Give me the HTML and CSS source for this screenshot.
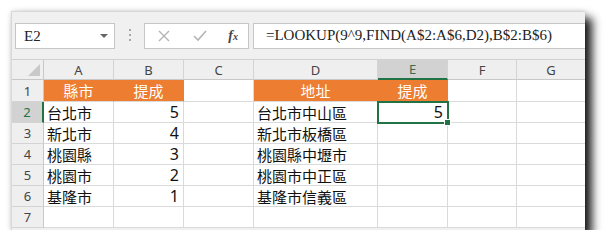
FILE: index.html
```html
<!DOCTYPE html>
<html lang="zh-Hant">
<head>
    <meta charset="UTF-8">
    <title>LOOKUP</title>
    <link rel="stylesheet" href="styles.css">
</head>
<body>
    <div class="window">
        <div class="toolbar">
            <div class="namebox">
                <span>E2</span>
                <span class="arrow"></span>
            </div>
            <div class="dots"><i></i><i></i><i></i></div>
            <div class="buttons">
                <svg width="14" height="14" viewBox="0 0 14 14"><path d="M2 2 L12 12 M12 2 L2 12" stroke="#b4b4b4" stroke-width="1.4" fill="none"/></svg>
                <svg width="16" height="14" viewBox="0 0 16 14"><path d="M2 7 L6 11 L14 2" stroke="#b4b4b4" stroke-width="1.6" fill="none"/></svg>
                <span class="fx">f<small>x</small></span>
            </div>
            <div class="formula">=LOOKUP(9^9,FIND(A$2:A$6,D2),B$2:B$6)</div>
        </div>
        <div class="sheet">
            <div class="corner"></div>
            <div class="colhead">A</div>
            <div class="colhead">B</div>
            <div class="colhead">C</div>
            <div class="colhead">D</div>
            <div class="colhead active">E</div>
            <div class="colhead">F</div>
            <div class="colhead">G</div>

            <div class="rowhead">1</div>
            <div class="cell title">縣市</div>
            <div class="cell title">提成</div>
            <div class="cell"></div>
            <div class="cell title">地址</div>
            <div class="cell title">提成</div>
            <div class="cell"></div>
            <div class="cell"></div>

            <div class="rowhead active">2</div>
            <div class="cell">台北市</div>
            <div class="cell num">5</div>
            <div class="cell"></div>
            <div class="cell">台北市中山區</div>
            <div class="cell num selected">5<span class="handle"></span></div>
            <div class="cell"></div>
            <div class="cell"></div>

            <div class="rowhead">3</div>
            <div class="cell">新北市</div>
            <div class="cell num">4</div>
            <div class="cell"></div>
            <div class="cell">新北市板橋區</div>
            <div class="cell"></div>
            <div class="cell"></div>
            <div class="cell"></div>

            <div class="rowhead">4</div>
            <div class="cell">桃園縣</div>
            <div class="cell num">3</div>
            <div class="cell"></div>
            <div class="cell">桃園縣中壢市</div>
            <div class="cell"></div>
            <div class="cell"></div>
            <div class="cell"></div>

            <div class="rowhead">5</div>
            <div class="cell">桃園市</div>
            <div class="cell num">2</div>
            <div class="cell"></div>
            <div class="cell">桃園市中正區</div>
            <div class="cell"></div>
            <div class="cell"></div>
            <div class="cell"></div>

            <div class="rowhead">6</div>
            <div class="cell">基隆市</div>
            <div class="cell num">1</div>
            <div class="cell"></div>
            <div class="cell">基隆市信義區</div>
            <div class="cell"></div>
            <div class="cell"></div>
            <div class="cell"></div>

            <div class="rowhead">7</div>
            <div class="cell"></div>
            <div class="cell"></div>
            <div class="cell"></div>
            <div class="cell"></div>
            <div class="cell"></div>
            <div class="cell"></div>
            <div class="cell"></div>
        </div>
    </div>
</body>
</html>
```

FILE: styles.css
```css
body {
    margin: 0;
    background-color: #fff;
    font-family: "Noto Sans", "Noto Sans CJK TC", sans-serif;
}
.window {
    margin: 11px 0 0 11px;
    width: 574px;
    height: 219px;
    background-color: #f0f0f0;
    border-top: 1px solid #d8d8d8;
    border-left: 1px solid #d8d8d8;
    box-sizing: border-box;
    box-shadow: 7px 7px 9px rgba(0, 0, 0, 0.9), 0 0 5px rgba(0, 0, 0, 0.15);
    overflow: hidden;
}
.toolbar {
    height: 47px;
    display: flex;
    align-items: flex-start;
    padding: 11px 0 0 3px;
    box-sizing: border-box;
}
.namebox {
    width: 100px;
    height: 26px;
    box-sizing: border-box;
    background-color: #fff;
    border: 1px solid #c6c6c6;
    display: flex;
    align-items: center;
    justify-content: space-between;
    padding: 0 6px 0 8px;
    font-family: "Liberation Serif", serif;
    font-size: 15px;
    color: #222;
}
.arrow {
    width: 0;
    height: 0;
    border-left: 4px solid transparent;
    border-right: 4px solid transparent;
    border-top: 4px solid #666;
}
.dots {
    width: 29px;
    display: flex;
    flex-direction: column;
    align-items: center;
    gap: 3px;
    padding-top: 6px;
}
.dots i {
    width: 2px;
    height: 2px;
    background-color: #a8a8a8;
}
.buttons {
    width: 105px;
    height: 26px;
    box-sizing: border-box;
    background-color: #fff;
    border: 1px solid #c6c6c6;
    display: flex;
    align-items: center;
    justify-content: space-between;
    padding: 0 10px 0 12px;
}
.fx {
    font-family: "Liberation Serif", serif;
    font-style: italic;
    font-weight: bold;
    font-size: 14px;
    color: #444;
}
.fx small {
    font-size: 10px;
}
.formula {
    margin-left: 4px;
    flex: 1;
    height: 26px;
    box-sizing: border-box;
    background-color: #fff;
    border: 1px solid #c6c6c6;
    border-right: none;
    padding: 3px 0 0 12px;
    font-family: "Liberation Serif", serif;
    font-size: 15px;
    color: #222;
    white-space: nowrap;
}
.sheet {
    display: grid;
    grid-template-columns: 32px 70px 70px 70px 124px 70px 69px 69px;
    grid-template-rows: 20px 22px 21px 21px 21px 21px 21px 21px;
    background-color: #fff;
    border-top: 1px solid #d0d0d0;
}
.corner {
    background-color: #efefef;
    border-right: 1px solid #c8c8c8;
    border-bottom: 1px solid #c8c8c8;
    position: relative;
}
.corner::after {
    content: "";
    position: absolute;
    right: 3px;
    bottom: 3px;
    border-left: 12px solid transparent;
    border-bottom: 12px solid #c9c9c9;
}
.colhead, .rowhead {
    background-color: #efefef;
    color: #444;
    font-size: 13px;
    display: flex;
    align-items: center;
    justify-content: center;
    border-right: 1px solid #d4d4d4;
    border-bottom: 1px solid #c8c8c8;
}
.rowhead {
    border-right: 1px solid #c8c8c8;
    border-bottom: 1px solid #d4d4d4;
}
.colhead.active {
    background-color: #d2d2d2;
    color: #3a6a4c;
    border-bottom: 2px solid #217346;
}
.rowhead.active {
    background-color: #d2d2d2;
    color: #217346;
    border-right: 2px solid #217346;
}
.cell {
    border-right: 1px solid #dadada;
    border-bottom: 1px solid #dadada;
    font-family: "Noto Sans CJK TC", sans-serif;
    font-size: 15px;
    color: #111;
    display: flex;
    align-items: center;
    padding: 0 3px;
    white-space: nowrap;
    overflow: visible;
}
.title {
    background-color: #ed7d31;
    color: #fff;
    justify-content: center;
    border-right-color: #ed7d31;
}
.num {
    justify-content: flex-end;
    font-family: "Noto Sans", sans-serif;
    font-size: 16px;
    padding-right: 4px;
}
.selected {
    position: relative;
    outline: 2px solid #217346;
    outline-offset: -1px;
}
.handle {
    position: absolute;
    right: -4px;
    bottom: -4px;
    width: 5px;
    height: 5px;
    background-color: #217346;
    border: 1px solid #fff;
}
```
